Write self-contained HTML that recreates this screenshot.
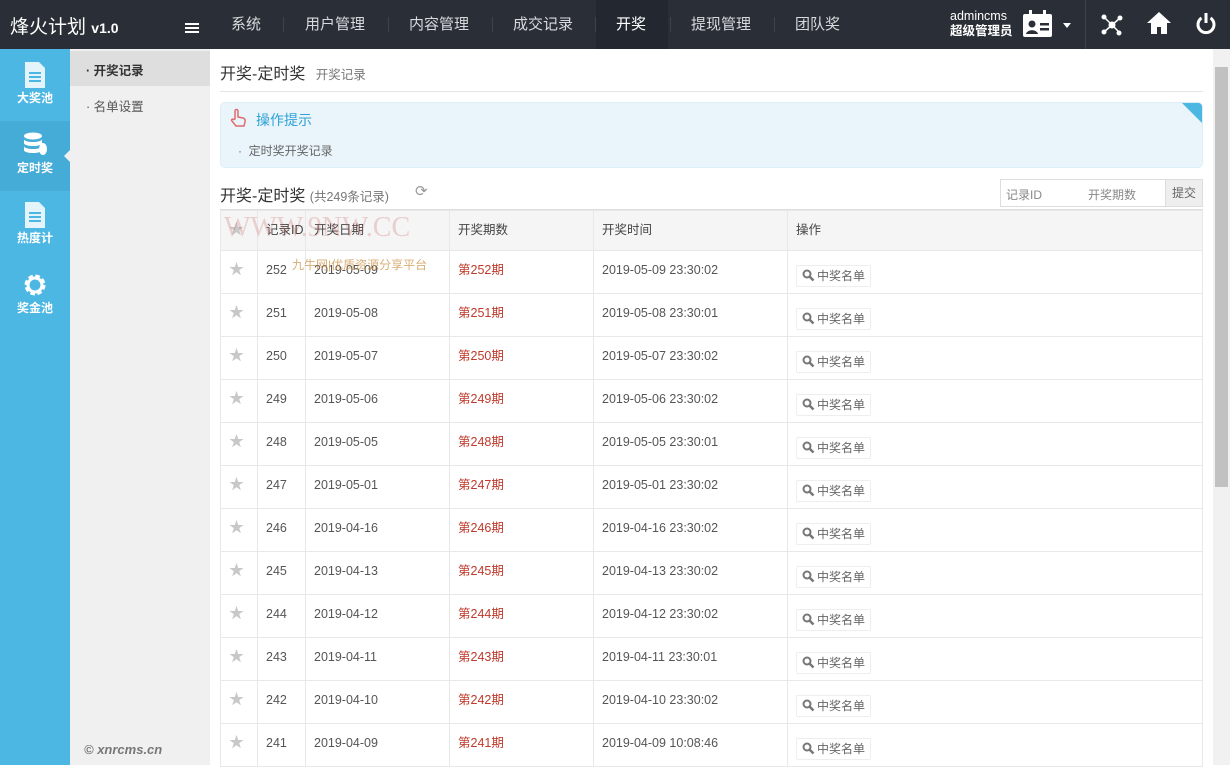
<!DOCTYPE html>
<html><head><meta charset="utf-8"><style>
*{margin:0;padding:0;box-sizing:border-box}
body{width:1230px;height:765px;overflow:hidden;font-family:"Liberation Sans","Noto Sans CJK SC",sans-serif;font-size:12px;color:#555;background:#fff;position:relative}
.a{position:absolute}
#top{left:0;top:0;width:1230px;height:49px;background:#2a2f37}
.nav{top:0;height:49px;line-height:49px;color:#d8dadd;font-size:15px}
.sep{top:17px;width:1px;height:15px;background:#3d434c}
#side{left:0;top:49px;width:70px;height:716px;background:#4cb7e3}
.si{left:0;width:70px;height:70px;color:#fff;font-size:12px;font-weight:bold;text-align:center}
#sub{left:70px;top:49px;width:140px;height:716px;background:#f0f0f0}
table{border-collapse:collapse;position:absolute;left:220px;top:210px;width:983px;table-layout:fixed}
td{border:1px solid #e8e8e8;height:43px;padding:0 8px;vertical-align:top;padding-top:11px;font-size:12.5px;line-height:16px;color:#555;white-space:nowrap;overflow:hidden}
tr.h td{background:#f5f5f5;height:40px;padding-top:11px;color:#444}
.red{color:#c0392b}
.btn{display:inline-block;border:1px solid #eee;border-radius:2px;padding:2px 5px;margin-top:3px;font-size:12px;line-height:16px;color:#666;background:#fff}
.btn svg{vertical-align:-2px;margin-right:2px}
.star{color:#c8c8c8;font-size:15px}
</style></head><body>
<div id="top" class="a"></div>
<div class="a" style="left:10px;top:12px;color:#fff;font-size:19px">烽火计划 <span style="font-size:14px;font-weight:bold">v1.0</span></div>
<div class="a" style="left:185px;top:23px;width:14px;height:2px;background:#fff;box-shadow:0 4px 0 #fff,0 8px 0 #fff"></div>
<div class="a" style="left:596px;top:0;width:72px;height:49px;background:#222730"></div>
<div class="a nav" style="left:231px">系统</div><div class="a sep" style="left:283px"></div>
<div class="a nav" style="left:305px">用户管理</div><div class="a sep" style="left:388px"></div>
<div class="a nav" style="left:409px">内容管理</div><div class="a sep" style="left:492px"></div>
<div class="a nav" style="left:513px">成交记录</div><div class="a sep" style="left:595px"></div>
<div class="a nav" style="left:616px;color:#fff">开奖</div><div class="a sep" style="left:670px"></div>
<div class="a nav" style="left:691px">提现管理</div><div class="a sep" style="left:774px"></div>
<div class="a nav" style="left:795px">团队奖</div>
<div class="a" style="left:950px;top:9px;color:#fff;font-size:12.5px;line-height:15px">admincms<br><b>超级管理员</b></div>
<svg class="a" style="left:1022px;top:10px" width="32" height="28" viewBox="0 0 32 28"><rect x="1" y="4" width="29" height="23" rx="2" fill="#fff"/><rect x="7" y="0" width="3" height="7" fill="#fff"/><rect x="21" y="0" width="3" height="7" fill="#fff"/><circle cx="10" cy="14" r="3.5" fill="#2a2f37"/><path d="M4 24c1-5 11-5 12 0z" fill="#2a2f37"/><rect x="18" y="13" width="9" height="2.5" fill="#2a2f37"/><rect x="18" y="18" width="9" height="2.5" fill="#2a2f37"/></svg>
<div class="a" style="left:1063px;top:23px;border:4px solid transparent;border-top:5px solid #fff"></div>
<div class="a" style="left:1085px;top:0;width:1px;height:49px;background:#3d434c"></div>
<svg class="a" style="left:1100px;top:13px" width="24" height="24" viewBox="0 0 24 24" fill="#fff"><circle cx="12" cy="12" r="3.5"/><circle cx="4" cy="4" r="2.5"/><circle cx="20" cy="5" r="2.5"/><circle cx="4" cy="19" r="2.5"/><circle cx="19" cy="20" r="2.5"/><path d="M4 4L20 20M20 5L4 19" stroke="#fff" stroke-width="1.5"/></svg>
<svg class="a" style="left:1146px;top:11px" width="26" height="24" viewBox="0 0 26 24" fill="#fff"><path d="M13 1L1 12h4v11h6v-7h4v7h6V12h4z"/></svg>
<svg class="a" style="left:1196px;top:13px" width="20" height="22" viewBox="0 0 20 22"><path d="M5.5 5A8 8 0 1 0 14.5 5" fill="none" stroke="#fff" stroke-width="3"/><rect x="8.5" y="0" width="3" height="10" fill="#fff"/></svg>

<div id="side" class="a"></div>
<div class="a" style="left:0;top:121px;width:70px;height:70px;background:#45acd8"></div>
<div class="a" style="left:64px;top:150px;border:6px solid transparent;border-right:6px solid #f0f0f0;border-left:0"></div>
<div class="a si" style="top:62px"><svg width="22" height="26" viewBox="0 0 22 26"><path d="M1 0h14l6 6v20H1z" fill="#fff" opacity=".85"/><path d="M5 11h12M5 15h12M5 19h12" stroke="#4cb7e3" stroke-width="2"/></svg><div style="margin-top:-2px">大奖池</div></div>
<div class="a si" style="top:132px"><svg width="26" height="26" viewBox="0 0 26 26" fill="#fff"><ellipse cx="11" cy="4" rx="9" ry="3.5"/><path d="M2 7c0 4 18 4 18 0v4c0 4-18 4-18 0zM2 14c0 4 18 4 18 0v4c0 4-18 4-18 0z"/><ellipse cx="21" cy="17" rx="4" ry="6"/></svg><div style="margin-top:-2px">定时奖</div></div>
<div class="a si" style="top:202px"><svg width="22" height="26" viewBox="0 0 22 26"><path d="M1 0h14l6 6v20H1z" fill="#fff" opacity=".85"/><path d="M5 11h12M5 15h12M5 19h12" stroke="#4cb7e3" stroke-width="2"/></svg><div style="margin-top:-2px">热度计</div></div>
<div class="a si" style="top:272px"><svg width="26" height="26" viewBox="0 0 26 26"><circle cx="13" cy="13" r="8" fill="none" stroke="#fff" stroke-width="5" stroke-dasharray="4 2.3"/><circle cx="13" cy="13" r="7" fill="none" stroke="#fff" stroke-width="3"/></svg><div style="margin-top:-2px">奖金池</div></div>

<div id="sub" class="a"></div>
<div class="a" style="left:70px;top:51px;width:140px;height:35px;background:#dedede"></div>
<div class="a" style="left:86px;top:60px;font-size:12.5px;color:#333;font-weight:bold">· 开奖记录</div>
<div class="a" style="left:86px;top:96px;font-size:12.5px;color:#555">· 名单设置</div>
<div class="a" style="left:84px;top:742px;font-size:13px;color:#777;font-style:italic;font-weight:bold">© xnrcms.cn</div>

<div class="a" style="left:220px;top:60px;font-size:16px;color:#333">开奖-定时奖 <span style="font-size:12.5px;color:#777;margin-left:6px">开奖记录</span></div>
<div class="a" style="left:220px;top:91px;width:983px;height:1px;background:#e5e5e5"></div>
<div class="a" style="left:220px;top:102px;width:983px;height:66px;background:#e9f5fb;border-radius:5px;border:1px solid #dceff8;overflow:hidden">
<div class="a" style="right:0;top:0;border:10px solid transparent;border-top:10px solid #4cb7e3;border-right:10px solid #4cb7e3"></div></div>
<svg class="a" style="left:229px;top:108px" width="18" height="20" viewBox="0 0 18 20"><path d="M6 11V3a1.5 1.5 0 0 1 3 0v6l5 1c2 .5 2.5 2 2 4l-1 4H7l-4-5c-1-1 0-2.5 1.5-1.5z" fill="none" stroke="#e06b6b" stroke-width="1.5"/></svg>
<div class="a" style="left:256px;top:110px;color:#2fa1d6;font-size:14px">操作提示</div>
<div class="a" style="left:238px;top:142px;color:#666;font-size:12px">· &nbsp;定时奖开奖记录</div>

<div class="a" style="left:220px;top:182px;font-size:16px;color:#333">开奖-定时奖 <span style="font-size:12.5px;color:#777">(共249条记录)</span></div>
<div class="a" style="left:415px;top:182px;font-size:15px;color:#999">⟳</div>
<div class="a" style="left:1000px;top:179px;width:203px;height:28px;border:1px solid #ddd;background:#fff"></div>
<div class="a" style="left:1006px;top:186px;color:#888">记录ID</div>
<div class="a" style="left:1088px;top:186px;color:#888">开奖期数</div>
<div class="a" style="left:1165px;top:180px;width:37px;height:26px;background:#eee;border-left:1px solid #ddd;text-align:center;line-height:26px;color:#666">提交</div>
<div class="a" style="left:220px;top:209px;width:983px;height:2px;background:#ddd"></div>

<table>
<colgroup><col style="width:37px"><col style="width:48px"><col style="width:144px"><col style="width:144px"><col style="width:194px"><col></colgroup>
<tr class="h"><td><span class="star">★</span></td><td style="padding-left:8px;padding-right:0">记录ID</td><td>开奖日期</td><td>开奖期数</td><td>开奖时间</td><td>操作</td></tr>
<tr><td><span class="star">★</span></td><td>252</td><td>2019-05-09</td><td class="red">第252期</td><td>2019-05-09 23:30:02</td><td><span class="btn"><svg width="13" height="13" viewBox="0 0 13 13"><circle cx="5" cy="5" r="3.5" fill="none" stroke="#777" stroke-width="2"/><path d="M7.5 7.5L11.5 11.5" stroke="#777" stroke-width="2.5"/></svg>中奖名单</span></td></tr>
<tr><td><span class="star">★</span></td><td>251</td><td>2019-05-08</td><td class="red">第251期</td><td>2019-05-08 23:30:01</td><td><span class="btn"><svg width="13" height="13" viewBox="0 0 13 13"><circle cx="5" cy="5" r="3.5" fill="none" stroke="#777" stroke-width="2"/><path d="M7.5 7.5L11.5 11.5" stroke="#777" stroke-width="2.5"/></svg>中奖名单</span></td></tr>
<tr><td><span class="star">★</span></td><td>250</td><td>2019-05-07</td><td class="red">第250期</td><td>2019-05-07 23:30:02</td><td><span class="btn"><svg width="13" height="13" viewBox="0 0 13 13"><circle cx="5" cy="5" r="3.5" fill="none" stroke="#777" stroke-width="2"/><path d="M7.5 7.5L11.5 11.5" stroke="#777" stroke-width="2.5"/></svg>中奖名单</span></td></tr>
<tr><td><span class="star">★</span></td><td>249</td><td>2019-05-06</td><td class="red">第249期</td><td>2019-05-06 23:30:02</td><td><span class="btn"><svg width="13" height="13" viewBox="0 0 13 13"><circle cx="5" cy="5" r="3.5" fill="none" stroke="#777" stroke-width="2"/><path d="M7.5 7.5L11.5 11.5" stroke="#777" stroke-width="2.5"/></svg>中奖名单</span></td></tr>
<tr><td><span class="star">★</span></td><td>248</td><td>2019-05-05</td><td class="red">第248期</td><td>2019-05-05 23:30:01</td><td><span class="btn"><svg width="13" height="13" viewBox="0 0 13 13"><circle cx="5" cy="5" r="3.5" fill="none" stroke="#777" stroke-width="2"/><path d="M7.5 7.5L11.5 11.5" stroke="#777" stroke-width="2.5"/></svg>中奖名单</span></td></tr>
<tr><td><span class="star">★</span></td><td>247</td><td>2019-05-01</td><td class="red">第247期</td><td>2019-05-01 23:30:02</td><td><span class="btn"><svg width="13" height="13" viewBox="0 0 13 13"><circle cx="5" cy="5" r="3.5" fill="none" stroke="#777" stroke-width="2"/><path d="M7.5 7.5L11.5 11.5" stroke="#777" stroke-width="2.5"/></svg>中奖名单</span></td></tr>
<tr><td><span class="star">★</span></td><td>246</td><td>2019-04-16</td><td class="red">第246期</td><td>2019-04-16 23:30:02</td><td><span class="btn"><svg width="13" height="13" viewBox="0 0 13 13"><circle cx="5" cy="5" r="3.5" fill="none" stroke="#777" stroke-width="2"/><path d="M7.5 7.5L11.5 11.5" stroke="#777" stroke-width="2.5"/></svg>中奖名单</span></td></tr>
<tr><td><span class="star">★</span></td><td>245</td><td>2019-04-13</td><td class="red">第245期</td><td>2019-04-13 23:30:02</td><td><span class="btn"><svg width="13" height="13" viewBox="0 0 13 13"><circle cx="5" cy="5" r="3.5" fill="none" stroke="#777" stroke-width="2"/><path d="M7.5 7.5L11.5 11.5" stroke="#777" stroke-width="2.5"/></svg>中奖名单</span></td></tr>
<tr><td><span class="star">★</span></td><td>244</td><td>2019-04-12</td><td class="red">第244期</td><td>2019-04-12 23:30:02</td><td><span class="btn"><svg width="13" height="13" viewBox="0 0 13 13"><circle cx="5" cy="5" r="3.5" fill="none" stroke="#777" stroke-width="2"/><path d="M7.5 7.5L11.5 11.5" stroke="#777" stroke-width="2.5"/></svg>中奖名单</span></td></tr>
<tr><td><span class="star">★</span></td><td>243</td><td>2019-04-11</td><td class="red">第243期</td><td>2019-04-11 23:30:01</td><td><span class="btn"><svg width="13" height="13" viewBox="0 0 13 13"><circle cx="5" cy="5" r="3.5" fill="none" stroke="#777" stroke-width="2"/><path d="M7.5 7.5L11.5 11.5" stroke="#777" stroke-width="2.5"/></svg>中奖名单</span></td></tr>
<tr><td><span class="star">★</span></td><td>242</td><td>2019-04-10</td><td class="red">第242期</td><td>2019-04-10 23:30:02</td><td><span class="btn"><svg width="13" height="13" viewBox="0 0 13 13"><circle cx="5" cy="5" r="3.5" fill="none" stroke="#777" stroke-width="2"/><path d="M7.5 7.5L11.5 11.5" stroke="#777" stroke-width="2.5"/></svg>中奖名单</span></td></tr>
<tr><td><span class="star">★</span></td><td>241</td><td>2019-04-09</td><td class="red">第241期</td><td>2019-04-09 10:08:46</td><td><span class="btn"><svg width="13" height="13" viewBox="0 0 13 13"><circle cx="5" cy="5" r="3.5" fill="none" stroke="#777" stroke-width="2"/><path d="M7.5 7.5L11.5 11.5" stroke="#777" stroke-width="2.5"/></svg>中奖名单</span></td></tr>
</table>
<div class="a" style="left:224px;top:212px;font-family:'Liberation Serif',serif;font-size:28px;color:rgba(200,90,90,.25)">WWW.9NW.CC</div>
<div class="a" style="left:292px;top:256px;font-size:12px;color:rgba(200,140,60,.7)">九牛网|优质资源分享平台</div>

<div class="a" style="left:1213px;top:49px;width:17px;height:716px;background:#f1f1f1"></div>
<div class="a" style="left:1215px;top:67px;width:13px;height:420px;background:#c1c1c1"></div>
</body></html>
